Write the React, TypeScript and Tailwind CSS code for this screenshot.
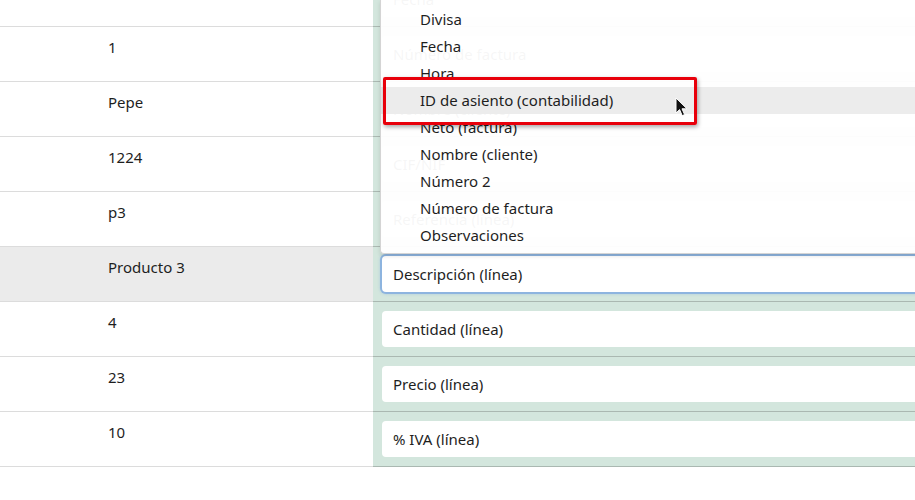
import React from 'react';

const rows = [
  { value: '', field: 'Fecha' },
  { value: '1', field: 'Número de factura' },
  { value: 'Pepe', field: 'Nombre (cliente)' },
  { value: '1224', field: 'CIF/NIF' },
  { value: 'p3', field: 'Referencia (línea)' },
  { value: 'Producto 3', field: 'Descripción (línea)', active: true },
  { value: '4', field: 'Cantidad (línea)' },
  { value: '23', field: 'Precio (línea)' },
  { value: '10', field: '% IVA (línea)' },
];

const options = [
  'Divisa',
  'Fecha',
  'Hora',
  'ID de asiento (contabilidad)',
  'Neto (factura)',
  'Nombre (cliente)',
  'Número 2',
  'Número de factura',
  'Observaciones',
];

const App: React.FC = () => {
  return (
    <div
      className="relative w-[915px] h-[500px] overflow-hidden bg-white text-[15px] text-[#1e1e1e]"
      style={{ fontFamily: '"Noto Sans", "Open Sans", sans-serif' }}
    >
      {/* Mapping table */}
      <div className="flex flex-col -mt-[28px]">
        {rows.map((row, i) => (
          <div key={i} className="flex h-[55px]">
            <div
              className={`w-[373px] shrink-0 border-b border-[#dcdcdc] pl-[108px] pt-[8px] leading-[24px] ${
                row.active ? 'bg-[#ebebeb]' : 'bg-white'
              }`}
            >
              {row.value}
            </div>
            <div className="flex-1 bg-[#d3e6dd] border-b border-[#aab8b1] pl-[9px] pt-[9px]">
              <div
                className={`h-[36px] -mr-[10px] flex items-center pl-[11px] rounded-[4px] bg-white ${
                  row.active ? 'ring-2 ring-[#8db4df] shadow-[0_0_3px_2px_rgba(120,165,215,0.45)]' : ''
                }`}
              >
                {row.field}
              </div>
            </div>
          </div>
        ))}
      </div>

      {/* Open dropdown */}
      <div className="absolute left-[380px] top-0 w-[560px] h-[254px] bg-white/[0.96] border-l border-b border-[#d4d4d4] rounded-bl-[4px] shadow-[0_2px_4px_rgba(0,0,0,0.12)] pt-[6px]">
        {options.map((opt) => (
          <div
            key={opt}
            className={`h-[27px] leading-[27px] pl-[39px] ${
              opt.startsWith('ID de') ? 'bg-[#ececec]' : ''
            }`}
          >
            {opt}
          </div>
        ))}
      </div>

      {/* Annotation box */}
      <div className="absolute left-[383px] top-[77px] w-[314px] h-[48px] border-[3px] border-[#e8000b] rounded-[2px] shadow-[1px_2px_4px_rgba(0,0,0,0.35)]" />

      {/* Mouse cursor */}
      <svg className="absolute left-[675px] top-[97px]" width="14" height="20" viewBox="0 0 14 20">
        <path
          d="M1 1 L1 16 L4.6 12.6 L7.2 18.6 L9.6 17.6 L7 11.8 L12 11.8 Z"
          fill="#111"
          stroke="#fff"
          strokeWidth="1"
          strokeLinejoin="round"
        />
      </svg>
    </div>
  );
};

export default App;
